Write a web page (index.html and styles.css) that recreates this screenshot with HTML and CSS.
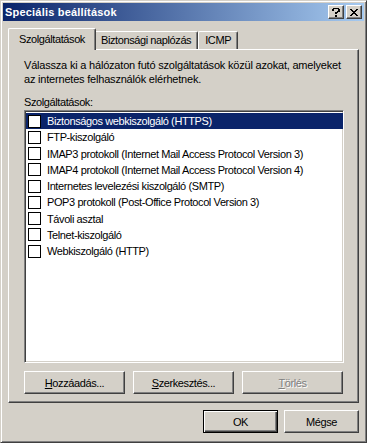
FILE: index.html
```html
<!DOCTYPE html>
<html lang="hu">
<head>
<meta charset="utf-8">
<title>Speciális beállítások</title>
<link rel="stylesheet" href="styles.css">
</head>
<body>
<div class="window">
  <div class="titlebar">
    <span class="title">Speciális beállítások</span>
    <div class="tbtns">
      <div class="tbtn help">
        <svg width="8" height="9" viewBox="0 0 8 9"><path d="M1 0h6v1H1zM0 1h2v2H0zM6 1h2v3H6zM5 3h2v1H5zM3 4h3v1H3zM3 5h2v1H3zM3 7h2v2H3z" fill="#000"/></svg>
      </div>
      <div class="tbtn close">
        <svg width="8" height="7" viewBox="0 0 8 7"><path d="M0 0h2v1H0zM6 0h2v1H6zM1 1h2v1H1zM5 1h2v1H5zM2 2h4v1H2zM3 3h2v1H3zM2 4h4v1H2zM1 5h2v1H1zM5 5h2v1H5zM0 6h2v1H0zM6 6h2v1H6z" fill="#000"/></svg>
      </div>
    </div>
  </div>
  <div class="content">
    <div class="tabs">
      <div class="tab active">Szolgáltatások</div>
      <div class="tab">Biztonsági naplózás</div>
      <div class="tab">ICMP</div>
    </div>
    <div class="panel">
      <p class="desc">Válassza ki a hálózaton futó szolgáltatások közül azokat, amelyeket az internetes felhasználók elérhetnek.</p>
      <div class="label">Szolgáltatások:</div>
      <div class="list">
        <div class="row sel"><span class="cb"></span><span class="txt">Biztonságos webkiszolgáló (HTTPS)</span></div>
        <div class="row"><span class="cb"></span><span class="txt">FTP-kiszolgáló</span></div>
        <div class="row"><span class="cb"></span><span class="txt">IMAP3 protokoll (Internet Mail Access Protocol Version 3)</span></div>
        <div class="row"><span class="cb"></span><span class="txt">IMAP4 protokoll (Internet Mail Access Protocol Version 4)</span></div>
        <div class="row"><span class="cb"></span><span class="txt">Internetes levelezési kiszolgáló (SMTP)</span></div>
        <div class="row"><span class="cb"></span><span class="txt">POP3 protokoll (Post-Office Protocol Version 3)</span></div>
        <div class="row"><span class="cb"></span><span class="txt">Távoli asztal</span></div>
        <div class="row"><span class="cb"></span><span class="txt">Telnet-kiszolgáló</span></div>
        <div class="row"><span class="cb"></span><span class="txt">Webkiszolgáló (HTTP)</span></div>
      </div>
      <div class="btnrow">
        <div class="btn wide"><span class="u">H</span>ozzáadás...</div>
        <div class="btn wide"><span class="u">S</span>zerkesztés...</div>
        <div class="btn wide disabled"><span class="u">T</span>örlés</div>
      </div>
    </div>
    <div class="footer">
      <div class="btn default">OK</div>
      <div class="btn">Mégse</div>
    </div>
  </div>
</div>
</body>
</html>
```

FILE: styles.css
```css
* { box-sizing: border-box; }
html, body { margin: 0; padding: 0; }
body {
  background: #d4d0c8;
  font-family: "Liberation Sans", Arial, sans-serif;
  font-size: 11px;
  letter-spacing: -0.4px;
  color: #000;
}
.window {
  width: 367px;
  height: 443px;
  background: #d4d0c8;
  border-top: 1px solid #d4d0c8;
  border-left: 1px solid #d4d0c8;
  border-right: 1px solid #404040;
  border-bottom: 1px solid #404040;
  box-shadow: inset 1px 1px 0 #fff, inset -1px -1px 0 #808080;
  padding: 2px;
  display: flex;
  flex-direction: column;
}
.titlebar {
  height: 18px;
  background: linear-gradient(to right, #0a246a, #a6caf0);
  display: flex;
  align-items: center;
  justify-content: space-between;
  padding: 0 2px 0 2px;
}
.title {
  color: #fff;
  font-weight: bold;
  font-size: 11px;
  letter-spacing: 0.2px;
}
.tbtns { display: flex; gap: 2px; }
.tbtn {
  width: 16px;
  height: 14px;
  background: #d4d0c8;
  border-top: 1px solid #fff;
  border-left: 1px solid #fff;
  border-right: 1px solid #404040;
  border-bottom: 1px solid #404040;
  box-shadow: inset -1px -1px 0 #808080;
  display: flex;
  align-items: center;
  justify-content: center;
}
.tbtn svg { display: block; }
.content {
  flex: 1;
  padding: 7px 5px 7px 5px;
  display: flex;
  flex-direction: column;
}
.tabs {
  display: flex;
  height: 21px;
  align-items: flex-end;
  padding-left: 2px;
  position: relative;
  z-index: 1;
}
.tab {
  height: 18px;
  padding: 1px 6px 0 6px;
  border-top: 1px solid #fff;
  border-left: 1px solid #fff;
  border-right: 1px solid #404040;
  box-shadow: inset -1px 0 0 #808080;
  border-radius: 2px 2px 0 0;
  line-height: 15px;
  white-space: nowrap;
}
.tab.active {
  height: 22px;
  margin: 0 -2px -1px -2px;
  padding: 3px 10px 0 10px;
  background: #d4d0c8;
  position: relative;
  z-index: 2;
}
.panel {
  height: 354px;
  border-top: 1px solid #fff;
  border-left: 1px solid #fff;
  border-right: 1px solid #404040;
  border-bottom: 1px solid #404040;
  box-shadow: inset -1px -1px 0 #808080;
  padding: 8px 0 0 15px;
  display: flex;
  flex-direction: column;
}
.desc {
  margin: 0;
  width: 322px;
  line-height: 14px;
  letter-spacing: -0.2px;
}
.label {
  margin-top: 10px;
  line-height: 13px;
}
.list {
  margin-top: 1px;
  width: 320px;
  height: 253px;
  background: #fff;
  border-top: 1px solid #808080;
  border-left: 1px solid #808080;
  border-right: 1px solid #fff;
  border-bottom: 1px solid #fff;
  box-shadow: inset 1px 1px 0 #404040, inset -1px -1px 0 #d4d0c8;
  padding: 2px 0 2px 1px;
}
.row {
  height: 16.25px;
  display: flex;
  align-items: center;
  padding-left: 2px;
  white-space: nowrap;
}
.row.sel { background: #0a246a; color: #fff; }
.cb {
  width: 13px;
  height: 13px;
  border: 1px solid #000;
  background: #fff;
  flex: none;
}
.txt { margin-left: 6px; }
.btnrow {
  margin-top: 8px;
  display: flex;
  gap: 8px;
}
.btn {
  width: 75px;
  height: 23px;
  background: #d4d0c8;
  border-top: 1px solid #fff;
  border-left: 1px solid #fff;
  border-right: 1px solid #404040;
  border-bottom: 1px solid #404040;
  box-shadow: inset -1px -1px 0 #808080;
  display: flex;
  align-items: center;
  justify-content: center;
}
.btn.wide { width: 101px; }
.btn.disabled { color: #808080; text-shadow: 1px 1px 0 #fff; }
.u { text-decoration: underline; }
.btn.default {
  border: 1px solid #000;
  box-shadow: inset 1px 1px 0 #fff, inset -1px -1px 0 #404040, inset -2px -2px 0 #808080;
}
.footer {
  margin-top: 7px;
  display: flex;
  justify-content: flex-end;
  gap: 6px;
}
```
